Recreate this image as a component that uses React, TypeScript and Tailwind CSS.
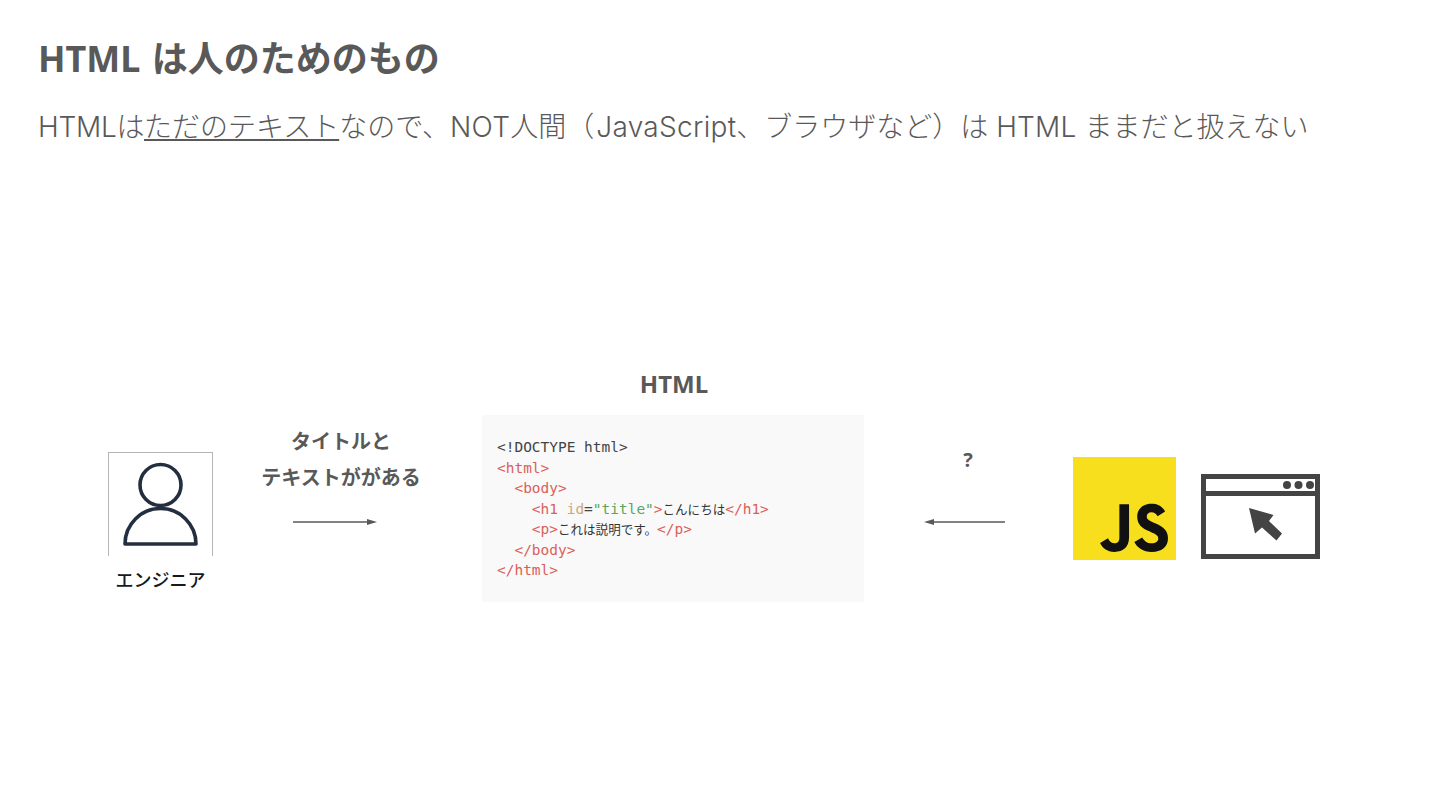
import React from "react";

const jp = '"Noto Sans CJK JP", sans-serif';
const sans = { fontFamily: '"Noto Sans", "Noto Sans CJK JP", sans-serif' };

function Arrow({ left = false, width }: { left?: boolean; width: number }) {
  return (
    <svg width={width} height="8" viewBox={`0 0 ${width} 8`} className="block">
      {left ? (
        <>
          <line x1="8" y1="4" x2={width} y2="4" stroke="#595959" strokeWidth="1.5" />
          <path d="M0 4 L10 1 L10 7 Z" fill="#595959" />
        </>
      ) : (
        <>
          <line x1="0" y1="4" x2={width - 8} y2="4" stroke="#595959" strokeWidth="1.5" />
          <path d={`M${width} 4 L${width - 10} 1 L${width - 10} 7 Z`} fill="#595959" />
        </>
      )}
    </svg>
  );
}

const R = ({ children }: { children: React.ReactNode }) => <span className="text-[#d9605a]">{children}</span>;
const J = ({ children }: { children: React.ReactNode }) => (
  <span className="text-[12.55px] text-[#333333]" style={{ fontFamily: jp }}>{children}</span>
);

export default function App() {
  return (
    <div className="w-[1440px] h-[810px] bg-white overflow-hidden text-[#595959]" style={sans}>
      <header className="pl-[38px] pt-[35px]">
        <h1 className="text-[36px] leading-[48px] font-bold [word-spacing:2px]">HTML は人のためのもの</h1>
        <p
          className="mt-[25px] text-[28px] leading-[38px] font-light whitespace-nowrap"
          style={{ fontFamily: 'Inter, "Noto Sans CJK JP", sans-serif' }}
        >
          <span className="tracking-[-0.25px]">HTML</span>は<span className="underline decoration-2 underline-offset-[2px]">ただのテキスト</span>なので、<span className="tracking-[0.3px]">NOT</span>人間（<span className="ml-[2px] tracking-[0.3px]">JavaScript</span>、ブラウザなど）は <span className="tracking-[0.2px]">HTML</span> ままだと扱えない
        </p>
      </header>

      <section className="flex items-start mt-[224px] pl-[108px]">
        <div className="w-[105px] mt-[82px] flex flex-col items-center">
          <div className="w-[105px] h-[104px] border-t border-x border-[#b5b5b5] flex items-center justify-center">
            <svg width="80" height="86" viewBox="0 0 80 86" fill="none" stroke="#232f3e" strokeWidth="3.6">
              <circle cx="39.500" cy="23" r="20.500" />
              <path d="M4 82 A35.500 35.500 0 0 1 75 82 Z" strokeLinejoin="round" />
            </svg>
          </div>
          <div className="mt-[9px] text-[18px] leading-[28px] font-medium text-[#16191f] whitespace-nowrap" style={{ fontFamily: jp }}>エンジニア</div>
        </div>

        <div className="w-[168px] ml-[44px] mt-[54px] flex flex-col items-center">
          <div className="text-[20px] leading-[36px] font-bold text-center whitespace-nowrap">タイトルと<br />テキストががある</div>
          <div className="mt-[22px] mr-[12px]"><Arrow width={84} /></div>
        </div>

        <div className="w-[382px] ml-[57px] flex flex-col items-center">
          <div className="text-[24px] leading-[28px] font-bold ml-[2px]">HTML</div>
          <pre
            className="mt-[17px] w-[382px] h-[187px] bg-[#f9f9f9] pl-[15px] pt-[22px] text-[14.47px] leading-[20.5px] text-[#444444]"
            style={{ fontFamily: '"DejaVu Sans Mono", monospace' }}
          >
            {"<!DOCTYPE html>\n"}
            <R>{"<html>"}</R>{"\n  "}
            <R>{"<body>"}</R>{"\n    "}
            <R>{"<h1 "}</R><span className="text-[#c9a77e]">id</span>=<span className="text-[#5ba65b]">"title"</span><R>{">"}</R><J>こんにちは</J><R>{"</h1>"}</R>{"\n    "}
            <R>{"<p>"}</R><J>これは説明です。</J><R>{"</p>"}</R>{"\n  "}
            <R>{"</body>"}</R>{"\n"}
            <R>{"</html>"}</R>
          </pre>
        </div>

        <div className="w-[81px] ml-[60px] mt-[76px] flex flex-col items-center">
          <div className="text-[20px] leading-[27px] font-bold ml-[7px]">?</div>
          <div className="mt-[45px]"><Arrow left width={81} /></div>
        </div>

        <div className="mt-[87px] ml-[68px] w-[103px] h-[103px] bg-[#f7df1e] shrink-0">
          <svg width="103" height="103" viewBox="0 0 630 630" className="block">
            <path d="M165.65 526.47l48.21-29.18C223.16 513.78 231.62 527.73 251.91 527.73c19.45 0 31.71-7.61 31.71-37.2V289.27h59.2v202.06c0 61.29-35.93 89.19-88.37 89.19-47.36 0-74.84-24.52-88.8-54.05" fill="#111" />
            <path d="M375 520.13l48.2-27.91c12.69 20.72 29.18 35.94 58.36 35.94 24.53 0 40.17-12.26 40.17-29.18 0-20.29-16.07-27.48-43.14-39.32l-14.79-6.35c-42.72-18.18-71.04-41.02-71.04-89.22 0-44.4 33.83-78.23 86.7-78.23 37.63 0 64.7 13.11 84.15 47.36l-46.09 29.6c-10.15-18.18-21.14-25.37-38.06-25.37-17.34 0-28.33 11-28.33 25.37 0 17.76 11 24.95 36.37 35.94l14.8 6.34c50.32 21.57 78.65 43.56 78.65 93 0 53.29-41.86 82.47-98.08 82.47-54.97 0-90.49-26.22-107.83-60.46" fill="#111" />
          </svg>
        </div>

        <svg width="119" height="85" viewBox="0 0 119 85" className="mt-[104px] ml-[25px] shrink-0">
          <rect x="2.500" y="2.500" width="114" height="80" fill="none" stroke="#444444" strokeWidth="5" />
          <line x1="2" y1="19.500" x2="117" y2="19.500" stroke="#444444" strokeWidth="5" />
          <circle cx="86" cy="11" r="4" fill="#444444" />
          <circle cx="97.500" cy="11" r="4" fill="#444444" />
          <circle cx="109" cy="11" r="4" fill="#444444" />
          <path d="M48 34 L72.500 41 L68 47 L81 59.500 L75.500 66.500 L61 53.500 L54 59.500 Z" fill="#444444" />
        </svg>
      </section>
    </div>
  );
}
